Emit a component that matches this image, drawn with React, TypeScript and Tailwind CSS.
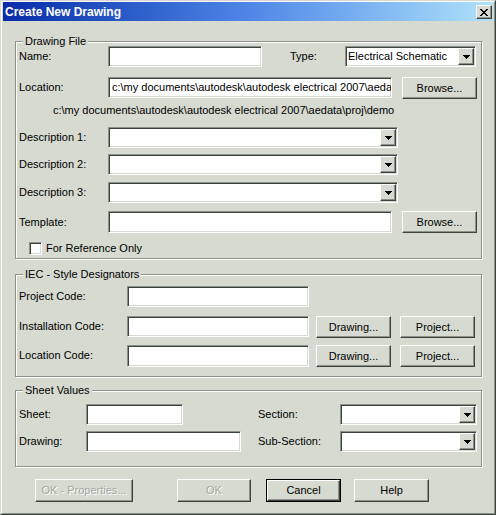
import type { ReactNode } from 'react'

const raised =
  'border border-t-white border-l-white border-r-[#3c4440] border-b-[#3c4440] shadow-[inset_-1px_-1px_0_#8c918a]'
const sunken =
  'border border-t-[#8c918a] border-l-[#8c918a] border-r-white border-b-white shadow-[inset_1px_1px_0_#3c4440,inset_-1px_-1px_0_#d6dad0]'

function Label({ w, ml = '', children }: { w: string; ml?: string; children: ReactNode }) {
  return <div className={`${w} ${ml} shrink-0 whitespace-nowrap`}>{children}</div>
}

function TextBox({ w, h = 'h-[21px]', value }: { w: string; h?: string; value?: string }) {
  return (
    <div className={`${w} ${h} ${sunken} shrink-0 bg-white pl-[3px] flex items-center overflow-hidden whitespace-nowrap`}>
      {value}
    </div>
  )
}

function Arrow() {
  return (
    <svg width="7" height="4" viewBox="0 0 7 4" shapeRendering="crispEdges">
      <rect x="0" y="0" width="7" height="1" fill="#000" />
      <rect x="1" y="1" width="5" height="1" fill="#000" />
      <rect x="2" y="2" width="3" height="1" fill="#000" />
      <rect x="3" y="3" width="1" height="1" fill="#000" />
    </svg>
  )
}

function Combo({ w, value }: { w: string; value?: string }) {
  return (
    <div className={`${w} h-[21px] ${sunken} shrink-0 bg-white flex`}>
      <div className="flex-1 pl-[2px] flex items-center overflow-hidden whitespace-nowrap">{value}</div>
      <div className={`w-[16px] h-[17px] m-[1px] bg-[#d6dad0] ${raised} flex items-center justify-center`}>
        <Arrow />
      </div>
    </div>
  )
}

function Btn({
  w,
  h = 'h-[22px]',
  ml = '',
  disabled = false,
  isDefault = false,
  children,
}: {
  w: string
  h?: string
  ml?: string
  disabled?: boolean
  isDefault?: boolean
  children: ReactNode
}) {
  const face = (
    <div
      className={`w-full h-full ${raised} flex items-center justify-center whitespace-nowrap ${
        disabled ? 'text-[#a3a79e] [text-shadow:1px_1px_0_#fff]' : 'text-black'
      }`}
    >
      {children}
    </div>
  )
  return (
    <div className={`${w} ${h} ${ml} shrink-0 bg-[#d6dad0] ${isDefault ? 'border border-black' : ''}`}>{face}</div>
  )
}

function Group({ title, mt, pb, children }: { title: string; mt: string; pb: string; children: ReactNode }) {
  return (
    <fieldset
      className={`${mt} ${pb} ml-[12px] w-[467px] pl-[3px] border border-[#8c918a] shadow-[inset_1px_1px_0_#fff,1px_1px_0_#fff]`}
    >
      <legend className="ml-[4px] px-[2px] leading-[10px] bg-[#d6dad0]">{title}</legend>
      {children}
    </fieldset>
  )
}

function CloseGlyph() {
  const rows = ['11000011', '01100110', '00111100', '00011000', '00111100', '01100110', '11000011']
  return (
    <svg width="8" height="7" viewBox="0 0 8 7" shapeRendering="crispEdges">
      {rows.map((r, y) =>
        r.split('').map((c, x) => (c === '1' ? <rect key={`${x}-${y}`} x={x} y={y} width="1" height="1" fill="#000" /> : null))
      )}
    </svg>
  )
}

export default function App() {
  const path = 'c:\\my documents\\autodesk\\autodesk electrical 2007\\aedata\\proj\\demo'
  // the location box only shows the start of the path
  const shownPath = 'c:\\my documents\\autodesk\\autodesk electrical 2007\\aeda'

  return (
    <div className="w-[496px] h-[515px] font-['Liberation_Sans',Arial,sans-serif] text-[11px] text-black border border-t-[#d6dad0] border-l-[#d6dad0] border-r-[#3c4440] border-b-[#3c4440]">
      <div className="h-full bg-[#d6dad0] border border-t-white border-l-white border-r-[#8c918a] border-b-[#8c918a] px-[1px]">
        {/* Title bar */}
        <div className="h-[19px] flex items-start bg-linear-to-r from-[#0c2aa8] via-[#4f86e6] to-[#b0e2fa]">
          <div className="flex-1 pl-[2px] h-full flex items-center text-white font-bold text-[12px]">Create New Drawing</div>
          <div className={`mt-[3px] mr-[1px] w-[16px] h-[14px] bg-[#d6dad0] ${raised} flex items-center justify-center`}>
            <CloseGlyph />
          </div>
        </div>

        {/* Drawing File */}
        <Group title="Drawing File" mt="mt-[15px]" pb="pb-[3px]">
          <div className="flex items-center h-[21px]">
            <Label w="w-[89px]">Name:</Label>
            <TextBox w="w-[154px]" />
            <Label w="w-[55px]" ml="ml-[28px]">Type:</Label>
            <Combo w="w-[131px]" value="Electrical Schematic" />
          </div>
          <div className="mt-[10px] flex items-start h-[22px]">
            <Label w="w-[89px] h-[21px] flex items-center">Location:</Label>
            <TextBox w="w-[284px]" value={shownPath} />
            <Btn w="w-[75px]" ml="ml-[10px]">Browse...</Btn>
          </div>
          <div className="mt-[5px] h-[13px] pl-[34px] flex items-center whitespace-nowrap">{path}</div>
          <div className="mt-[10px] flex items-center h-[21px]">
            <Label w="w-[89px]">Description 1:</Label>
            <Combo w="w-[290px]" />
          </div>
          <div className="mt-[6px] flex items-center h-[21px]">
            <Label w="w-[89px]">Description 2:</Label>
            <Combo w="w-[290px]" />
          </div>
          <div className="mt-[7px] flex items-center h-[21px]">
            <Label w="w-[89px]">Description 3:</Label>
            <Combo w="w-[290px]" />
          </div>
          <div className="mt-[8px] flex items-center h-[22px]">
            <Label w="w-[89px]">Template:</Label>
            <TextBox w="w-[284px]" h="h-[22px]" />
            <Btn w="w-[75px]" ml="ml-[10px]">Browse...</Btn>
          </div>
          <div className="mt-[9px] h-[13px] pl-[10px] flex items-center">
            <div className={`w-[13px] h-[13px] bg-white ${sunken}`} />
            <span className="ml-[4px]">For Reference Only</span>
          </div>
        </Group>

        {/* IEC */}
        <Group title="IEC - Style Designators" mt="mt-[10px]" pb="pb-[9px]">
          <div className="mt-[7px] flex items-center h-[21px]">
            <Label w="w-[108px]">Project Code:</Label>
            <TextBox w="w-[182px]" />
          </div>
          <div className="mt-[9px] flex items-start h-[22px]">
            <Label w="w-[108px] h-[21px] flex items-center">Installation Code:</Label>
            <TextBox w="w-[182px]" />
            <Btn w="w-[75px]" ml="ml-[7px]">Drawing...</Btn>
            <Btn w="w-[75px]" ml="ml-[9px]">Project...</Btn>
          </div>
          <div className="mt-[7px] flex items-start h-[22px]">
            <Label w="w-[108px] h-[21px] flex items-center">Location Code:</Label>
            <TextBox w="w-[182px]" h="h-[22px]" />
            <Btn w="w-[75px]" ml="ml-[7px]">Drawing...</Btn>
            <Btn w="w-[75px]" ml="ml-[9px]">Project...</Btn>
          </div>
        </Group>

        {/* Sheet Values */}
        <Group title="Sheet Values" mt="mt-[8px]" pb="pb-[14px]">
          <div className="mt-[9px] flex items-center h-[21px]">
            <Label w="w-[67px]">Sheet:</Label>
            <TextBox w="w-[97px]" />
            <Label w="w-[82px]" ml="ml-[75px]">Section:</Label>
            <Combo w="w-[137px]" />
          </div>
          <div className="mt-[6px] flex items-center h-[21px]">
            <Label w="w-[67px]">Drawing:</Label>
            <TextBox w="w-[155px]" />
            <Label w="w-[82px]" ml="ml-[17px]">Sub-Section:</Label>
            <Combo w="w-[137px]" />
          </div>
        </Group>

        {/* Buttons */}
        <div className="mt-[12px] ml-[32px] flex items-center">
          <Btn w="w-[98px]" h="h-[23px]" disabled>OK - Properties...</Btn>
          <Btn w="w-[74px]" h="h-[23px]" ml="ml-[44px]" disabled>OK</Btn>
          <Btn w="w-[75px]" h="h-[23px]" ml="ml-[15px]" isDefault>Cancel</Btn>
          <Btn w="w-[75px]" h="h-[23px]" ml="ml-[13px]">Help</Btn>
        </div>
      </div>
    </div>
  )
}
